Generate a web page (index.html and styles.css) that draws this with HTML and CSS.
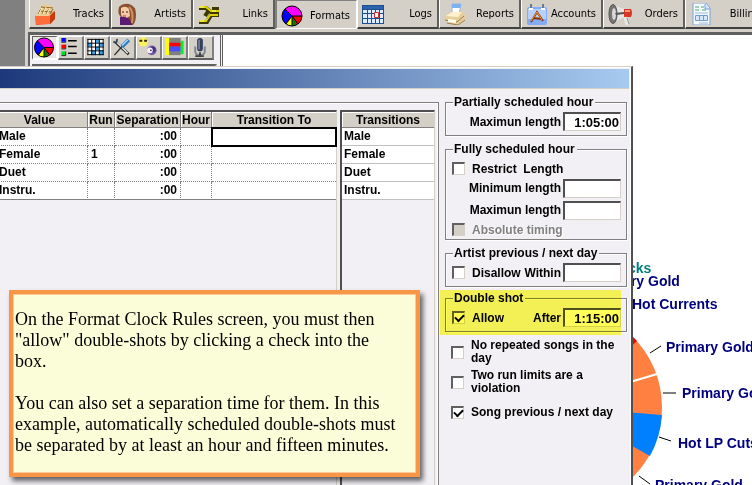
FILE: index.html
```html
<!DOCTYPE html>
<html lang="en">
<head>
<meta charset="utf-8">
<title>Format Clock Rules</title>
<link rel="stylesheet" href="styles.css">
</head>

<body>
<svg class="defs" aria-hidden="true">
	<symbol id="pie" viewBox="0 0 22 22">
		<circle cx="11" cy="11" r="10" fill="#f0f"/>
		<path d="M11 11L4 4A10 10 0 0 0 5 19z" fill="#00f"/>
		<path d="M11 11L5 19A10 10 0 0 0 11 21z" fill="#ff0"/>
		<path d="M11 11V21A10 10 0 0 0 16 19.600z" fill="#008000"/>
		<path d="M11 11L16 19.600A10 10 0 0 0 21 11z" fill="#f00"/>
		<path d="M11 11L4 4M11 11L5 19M11 11V21M11 11L17 19M11 11H21" stroke="#000" fill="none"/>
		<circle cx="11" cy="11" r="10" fill="none" stroke="#000"/>
	</symbol>
</svg>

<div class="app">
	<div class="gutter"></div>
	<div class="frame">
		<nav class="tabs">
			<button class="tab" type="button">
				<svg viewBox="0 0 22 22"><path d="M1 13L15 10 20 8V16L16 21 2 22z" fill="#f4511e"/><path d="M1 13L15 13 20 8 21 10V16L16 21 2 21z" fill="#ff6d3a"/><path d="M16 13L21 8V16L16 21z" fill="#c93a10"/><path d="M2 13L7 3 12 1 20 4V8L15 13z" fill="#e9cf93"/><path d="M4 11L7 6M8 11L11 5M12 11L15 6M16 11L19 6M7 4L19 5M5 8L18 9" stroke="#8a6427" fill="none"/><path d="M5 11L8 5M9 11L12 4M13 11L16 5" stroke="#fff5d2" fill="none"/></svg>
				<span>Tracks</span>
			</button>
			<button class="tab" type="button">
				<svg viewBox="0 0 22 22"><path d="M3 4Q7 0 13 1Q20 3 20 11Q20 19 17 22L5 22Q7 18 5 14Q1 11 3 4z" fill="#8a5030"/><path d="M5 5Q10 2 13 6L14 13 9 16Q5 15 5 10z" fill="#f5cba8"/><path d="M4 14Q10 13 14 17L16 22H4z" fill="#5b1b72"/><path d="M13 4Q18 8 16 20" stroke="#d09363" stroke-width="2" fill="none"/><path d="M6 9H8M10 9H12" stroke="#402018"/><path d="M7 13H10" stroke="#c03040"/></svg>
				<span>Artists</span>
			</button>
			<button class="tab" type="button">
				<svg viewBox="0 0 22 22"><path d="M1 5H8L13 9H21M21 6H14M1 19H9L13 12H21M7 13L11 7" stroke="#3c3800" stroke-width="4" fill="none"/><path d="M1 4H8L13 8H21M1 18H8L12 12H20" stroke="#d9d000" stroke-width="2" fill="none"/><path d="M1 4H6M14 8H18M2 18H6" stroke="#ffff90" fill="none"/></svg>
				<span>Links</span>
			</button>
			<button class="tab pressed" type="button">
				<svg><use href="#pie"/></svg>
				<span>Formats</span>
			</button>
			<button class="tab" type="button">
				<svg viewBox="0 0 22 22"><path d="M0 2H22V21H0z" fill="#1d4d93"/><path d="M1 3H21V6H1z" fill="#2b62ae"/><path d="M1 7H5V10H1zM6 7H9V10H6zM10 7H13V10H10zM14 7H17V10H14zM18 7H21V10H18zM1 11H5V15H1zM6 11H9V15H6zM10 11H13V15H10zM14 11H17V15H14zM18 11H21V15H18zM1 16H5V20H1zM6 16H9V20H6zM10 16H13V20H10zM14 16H17V20H14zM18 16H21V20H18z" fill="#dcecff"/><path d="M12.500 9.500H16.500V14.500H12.500z" fill="#fff" stroke="#d82828"/></svg>
				<span>Logs</span>
			</button>
			<button class="tab" type="button">
				<svg viewBox="0 0 22 22"><path d="M8 1H17L15 12H8z" fill="#fff" stroke="#9ab6dc"/><path d="M8 1H17L16 5H8z" fill="#78b2f5"/><path d="M2 12L8 9H19L21 12V18L14 22 1 18z" fill="#e6cf9d"/><path d="M2 13L8 9H18L14 14z" fill="#fff1cc"/><path d="M1 17L13 19 20 13M3 20L14 22 21 17" stroke="#9b7b48" fill="none"/><path d="M4 16L12 17V20L4 19z" fill="#fffbe4"/></svg>
				<span>Reports</span>
			</button>
			<button class="tab" type="button">
				<svg viewBox="0 0 22 22"><rect x="1" y="4" width="20" height="18" rx="2" fill="#84abf5"/><path d="M2 6H20V16H2z" fill="#b7d0fd"/><path d="M5 1V6M17 1V6" stroke="#647c8f" stroke-width="2"/><path d="M3 6H7M15 6H19" stroke="#fff" stroke-width="2"/><path d="M5 19L11 9 17 18M7 15L16 16" stroke="#8b3510" stroke-width="2" fill="none"/><path d="M5 18L11 9 16 17" stroke="#f4a02c" fill="none"/></svg>
				<span>Accounts</span>
			</button>
			<button class="tab wide_icon" type="button">
				<svg viewBox="0 0 25 22"><path d="M5 2L16 6V14L5 20z" fill="#e5e5e5"/><ellipse cx="5" cy="11" rx="4" ry="9.500" fill="#777" stroke="#525252"/><ellipse cx="6" cy="11" rx="2" ry="6" fill="#d8d8d8"/><path d="M7 10L16 9V11L8 12z" fill="#555"/><path d="M16 6H23Q25 10 23 14H16z" fill="#d93524"/><path d="M17 7H22V9H17z" fill="#ff9c80"/><path d="M17 14L19 22" stroke="#e8e8e8" stroke-width="3"/><path d="M19 15L21 21" stroke="#999"/></svg>
				<span>Orders</span>
			</button>
			<button class="tab" type="button">
				<svg viewBox="0 0 22 22"><path d="M3 0H16L20 5V22H3z" fill="#f3f9ff" stroke="#79a3d4"/><path d="M15 1V6H20" fill="#cfe3fa" stroke="#79a3d4"/><path d="M5 4H9M11 4H14M5 7H9M12 7H16" stroke="#55a96b"/><path d="M5.500 12.500H17.500V17.500H5.500zM9.500 12V18M13.500 12V18" fill="#d7e8fc" stroke="#6f9cd0"/><path d="M5 10H18M9 20H18" stroke="#9cbce3"/></svg>
				<span>Billing</span>
			</button>
		</nav>

		<div class="workspace">
			<div class="side_pane">
				<div class="tools">
					<button class="tool on" type="button" aria-label="Clock"><svg><use href="#pie"/></svg></button>
					<button class="tool" type="button" aria-label="List"><svg viewBox="0 0 22 22"><path d="M2 1H6V5H2z" fill="#00f"/><path d="M2 8H6V12H2z" fill="#f00"/><path d="M2 15H6V19H2z" fill="#00e020"/><path d="M2 5.500H6.500V1M2 12.500H6.500V8M2 19.500H6.500V15" stroke="#222" fill="none"/><path d="M9 4H18M9 10H18M9 17H18" stroke="#000" stroke-width="1.500"/></svg></button>
					<button class="tool" type="button" aria-label="Grid"><svg viewBox="0 0 22 22"><path d="M2 2H19V19H2z" fill="#fff"/><path d="M10 2H14V6H10zM2 6H6V10H2zM14 6H19V10H14zM10 10H14V14H10zM6 14H10V19H6zM14 14H19V19H14z" fill="#38a7f5"/><path d="M2.500 2V19M6.500 2V19M10.500 2V19M14.500 2V19M18.500 2V19M2 2.500H19M2 6.500H19M2 10.500H19M2 14.500H19M2 18.500H19" stroke="#000" fill="none"/></svg></button>
					<button class="tool" type="button" aria-label="Tools"><svg viewBox="0 0 22 22"><path d="M4 5L18 18" stroke="#222" stroke-width="3"/><path d="M4 4L17 17" stroke="#e8eef2" stroke-width="1.500"/><path d="M2 5L5 6 6 2" stroke="#3e4b56" stroke-width="2" fill="none"/><path d="M18 3L11 10" stroke="#2979ba" stroke-width="4"/><path d="M17 3L11 9" stroke="#a6dcff" stroke-width="1.500"/><path d="M11 10L3 19" stroke="#333" stroke-width="1.500"/></svg></button>
					<button class="tool" type="button" aria-label="Dayparts"><svg viewBox="0 0 22 22"><circle cx="6" cy="5" r="5" fill="#f8f260"/><path d="M2 3H5V5H2zM7 3H10V5H7z" fill="#302800"/><circle cx="15" cy="14" r="5" fill="#725ba7"/><circle cx="16" cy="13" r="3" fill="#4c317e"/><circle cx="13" cy="14" r="3" fill="#f7f2ff"/><circle cx="14" cy="14" r="1" fill="#503080"/></svg></button>
					<button class="tool" type="button" aria-label="Bars"><svg viewBox="0 0 22 22"><path d="M2 1H6V19H2z" fill="#ff0"/><path d="M6 1H18V19H6z" fill="#808080"/><path d="M6 6H18V10H6z" fill="#f00"/><path d="M6 10H18V15H6z" fill="#4c4cff"/><path d="M18 4H21V18H18z" fill="#00f020"/></svg></button>
					<button class="tool" type="button" aria-label="Microphone"><svg viewBox="0 0 22 22"><path d="M6 10V15Q6 19 11 19T16 15V10" fill="none" stroke="#7b8492" stroke-width="2"/><rect x="8" y="1" width="6" height="14" rx="3" fill="#34405c"/><path d="M10 3V13" stroke="#a4b4d2"/><path d="M11 16V20M6 20H15" stroke="#444" stroke-width="2"/></svg></button>
				</div>
				<div class="list_pane"></div>
			</div>
			<div class="chart">
				<svg class="clock" viewBox="223 35 529 450" width="529" height="450">
					<circle cx="563" cy="407" r="99" fill="#ff8040"/>
					<path d="M563 407V308A99 99 0 0 1 637 341z" fill="#f00"/>
					<path d="M563 407L662 415A99 99 0 0 1 650 456z" fill="#0080ff"/>
					<path d="M563 402L657 374" stroke="#fff" stroke-width="2"/>
					<path d="M650 353L661 346M663 393H676M659 437L671 441M639 476L650 484" stroke="#000"/>
					<text x="607" y="273" class="teal">Tracks</text>
					<text x="592" y="286">Primary Gold</text>
					<text x="632" y="309">Hot Currents</text>
					<text x="666" y="352">Primary Gold</text>
					<text x="682" y="398">Primary Gold</text>
					<text x="678" y="448">Hot LP Cuts</text>
					<text x="655" y="490">Primary Gold</text>
				</svg>
			</div>
		</div>
	</div>
</div>

<div class="dialog" role="dialog" aria-label="Format Clock Rules">
	<div class="title_bar"></div>
	<div class="dialog_body">
		<div class="rules">
			<div class="grid_box grid_main">
				<table class="grid">
					<colgroup><col><col class="c_run"><col class="c_sep"><col class="c_hour"><col class="c_trans"></colgroup>
					<thead>
						<tr><th>Value</th><th>Run</th><th>Separation</th><th>Hour</th><th>Transition To</th></tr>
					</thead>
					<tbody>
						<tr><td>Male</td><td></td><td class="num">:00</td><td></td><td class="current"></td></tr>
						<tr><td>Female</td><td>1</td><td class="num">:00</td><td></td><td></td></tr>
						<tr><td>Duet</td><td></td><td class="num">:00</td><td></td><td></td></tr>
						<tr><td>Instru.</td><td></td><td class="num">:00</td><td></td><td></td></tr>
					</tbody>
				</table>
			</div>
			<div class="grid_box grid_side">
				<table class="grid plain">
					<thead>
						<tr><th>Transitions</th></tr>
					</thead>
					<tbody>
						<tr><td>Male</td></tr>
						<tr><td>Female</td></tr>
						<tr><td>Duet</td></tr>
						<tr><td>Instru.</td></tr>
					</tbody>
				</table>
			</div>
		</div>

		<form class="settings">
			<fieldset>
				<legend>Partially scheduled hour</legend>
				<div class="row"><label for="part_max">Maximun length</label><input type="text" id="part_max" value="1:05:00"></div>
			</fieldset>
			<fieldset class="full">
				<legend>Fully scheduled hour</legend>
				<div class="row short"><input type="checkbox" id="restrict"><label class="check_label" for="restrict">Restrict&nbsp; Length</label></div>
				<div class="row"><label for="full_min">Minimum length</label><input type="text" id="full_min"></div>
				<div class="row"><label for="full_max">Maximun length</label><input type="text" id="full_max"></div>
				<div class="row short"><input type="checkbox" id="abs_time" disabled><label class="check_label" for="abs_time">Absolute timing</label></div>
			</fieldset>
			<fieldset>
				<legend>Artist previous / next day</legend>
				<div class="row"><input type="checkbox" id="disallow"><label class="check_label" for="disallow">Disallow</label><label for="within">Within</label><input type="text" id="within"></div>
			</fieldset>
			<fieldset class="double">
				<legend>Double shot</legend>
				<div class="row"><input type="checkbox" id="allow" checked><label class="check_label" for="allow">Allow</label><label for="after">After</label><input type="text" id="after" value="1:15:00"></div>
			</fieldset>
			<div class="options">
				<div class="option"><input type="checkbox" id="no_repeat"><label for="no_repeat">No repeated songs in the day</label></div>
				<div class="option"><input type="checkbox" id="two_run"><label for="two_run">Two run limits are a violation</label></div>
				<div class="option"><input type="checkbox" id="song_prev" checked><label for="song_prev">Song previous / next day</label></div>
			</div>
		</form>
	</div>
</div>

<div class="note">
	<p>On the Format Clock Rules screen, you must then "allow" double-shots by clicking a check into the box.</p>
	<p>You can also set a separation time for them. In this example, automatically scheduled double-shots must be separated by at least an hour and fifteen minutes.</p>
</div>
</body>
</html>
```

FILE: styles.css
```css
html,body {height: 100%;}
body,p,fieldset,legend,input,button,form {margin: 0;padding: 0;}
* {box-sizing: border-box;}
body {position: relative;overflow: hidden;background: #fff;font: bold 12px/14px "Liberation Sans", Arial, sans-serif;color: #000;}
.defs {position: absolute;width: 0;height: 0;}

/* main window */
.app {display: flex;height: 100%;overflow: hidden;}
.gutter {flex: none;width: 25px;background: #808080;}
.frame {flex: 1;min-width: 0;display: flex;flex-direction: column;border-left: 3px solid #d4d0c8;box-shadow: inset 1px 0 0 #808080;}
.tabs {display: flex;flex: none;height: 32px;padding: 0 0 3px 1px;background: #d4d0c8;overflow: hidden;}
.tab {flex: none;display: flex;align-items: center;justify-content: space-between;width: 82px;height: 29px;padding: 0 5px 0 4px;background: #d4d0c8;border: solid;border-width: 0 2px 2px 1px;border-color: #fff #606060 #404040 #fff;font: 11px/14px "DejaVu Sans Condensed", "DejaVu Sans", sans-serif;color: #000;}
.tab svg {flex: none;width: 22px;height: 22px;}
.tab.wide_icon svg {width: 25px;}
.tab.pressed {padding: 2px 6px 0 4px;border-width: 1px 1px 1px 2px;border-color: #808080 #fff #fff #808080;}
.workspace {flex: 1;min-height: 0;display: flex;border-top: 3px solid #606060;border-left: 2px solid #606060;}
.side_pane {flex: none;width: 193px;display: flex;flex-direction: column;gap: 4px;padding: 1px 3px 0 2px;background: #f2f0f4;border-right: 3px double #606060;}
.tools {display: flex;}
.tool {width: 26px;height: 24px;background: #d4d0c8;border: solid;border-width: 1px 2px 2px 1px;border-color: #fff #808080 #606060 #fff;}
.tool svg {display: block;width: 22px;height: 21px;}
.tool.on {background: #eae8e4;border-color: #606060 #fff #fff #606060;}
.list_pane {flex: 1;background: #fff;border: 2px solid #606060;border-right-color: #d4d0c8;}
.chart {flex: 1;min-width: 0;overflow: hidden;background: #fff;}
.clock {display: block;font-size: 14px;fill: #000080;}
.clock .teal {fill: #008080;}

/* rules dialog */
.dialog {position: absolute;top: 66px;left: -8px;right: 119px;bottom: 0;display: flex;flex-direction: column;overflow: hidden;background: #f2f0f4;border-top: 1px solid #d4d0c8;border-right: 2px solid #505050;box-shadow: inset -1px 1px 0 #fff;}
.title_bar {flex: none;height: 20px;margin: 2px 2px 0 0;background: linear-gradient(to right, #1b3779, #a6caf0);border-bottom: 1px solid #d4d0c8;}
.dialog_body {flex: 1;display: flex;gap: 6px;padding: 6px 4px 0 0;}
.rules {flex: 1;display: flex;gap: 3px;margin-top: 7px;padding: 7px 3px 0 0;border: solid #808080;border-width: 1px 1px 0 0;box-shadow: inset -1px 1px 0 #fff;}
.grid_box {border-top: 2px solid #505050;border-right: 1px solid #d4d0c8;}
.grid_main {flex: 1;}
.grid_side {width: 95px;border-left: 2px solid #505050;}
.grid {width: 100%;table-layout: fixed;border-collapse: separate;border-spacing: 0;background: #fff;}
.c_run {width: 27px;}
.c_sep {width: 66px;}
.c_hour {width: 31px;}
.c_trans {width: 124px;}
.grid th {height: 16px;padding: 0;background: #d4d0c8;border-right: 1px solid #808080;border-bottom: 1px solid #808080;box-shadow: inset 1px 1px 0 #fff;font-weight: bold;white-space: nowrap;}
.grid td {height: 18px;padding: 0 3px 1px;border-right: 1px dotted #808080;border-bottom: 1px dotted #808080;}
.grid td:first-child {padding-left: 7px;}
.grid tr:last-child td {border-bottom-style: solid;}
.grid th:last-child,
.grid td:last-child {border-right: 0 none;}
.grid .num {text-align: right;}
.grid .current {outline: 2px solid #000;outline-offset: -1px;}
.grid.plain td {padding-left: 2px;border-bottom: 1px solid #c0c0c0;}

.settings {flex: none;width: 182px;display: flex;flex-direction: column;}
fieldset {min-width: 0;margin-bottom: 6px;padding: 3px 5px 4px 6px;border: 1px solid #808080;box-shadow: 1px 1px 0 #fff, inset 1px 1px 0 #fff;}
legend {height: 14px;margin-left: 1px;padding: 0 2px 0 1px;background: #f2f0f4;}
.row {display: flex;align-items: center;justify-content: flex-end;gap: 2px;height: 19px;}
.check_label {margin-left: 5px;margin-right: auto;}
.full {padding: 4px 5px 1px 6px;}
.full .row {height: 22px;}
.full .row.short {height: 17px;}
input[type="text"] {width: 58px;height: 19px;padding: 0 1px;background: #fff;border: solid;border-width: 2px 1px 1px 2px;border-color: #505050 #d4d0c8 #d4d0c8 #505050;border-radius: 0;font: inherit;font-size: 13px;text-align: right;}
input[type="checkbox"] {appearance: none;flex: none;display: grid;place-items: center;width: 13px;height: 13px;margin: 0;background: #fff;border: solid;border-width: 2px 1px 1px 2px;border-color: #606060 #d4d0c8 #d4d0c8 #606060;}
input[type="checkbox"]:checked::before {content: "";width: 7px;height: 4px;margin-top: -2px;border: solid #000;border-width: 0 0 2px 2px;transform: rotate(-45deg);}
input[type="checkbox"]:disabled {background: #d4d0c8;}
input[type="checkbox"]:disabled + label {color: #808080;text-shadow: 1px 1px 0 #fff;}
.double {position: relative;margin-top: -2px;}
.double::after {content: "";position: absolute;top: -15px;right: 5px;bottom: -4px;left: -6px;background: #ffff58;mix-blend-mode: multiply;pointer-events: none;}
.options {display: flex;flex-direction: column;gap: 4px;margin-top: 1px;padding-left: 6px;line-height: 13px;}
.option {display: flex;align-items: center;gap: 7px;min-height: 26px;}

/* callout */
.note {position: absolute;top: 290px;left: 9px;width: 411px;padding: 15px 16px 17px 2px;background: #fbfdd8;border: 4px solid #f79646;box-shadow: 3px 4px 5px rgba(0,0,0,.6), inset 0 0 0 1px #fbc999;font: 18px/21px "Liberation Serif", "Times New Roman", serif;}
.note p + p {margin-top: 21px;}
```
